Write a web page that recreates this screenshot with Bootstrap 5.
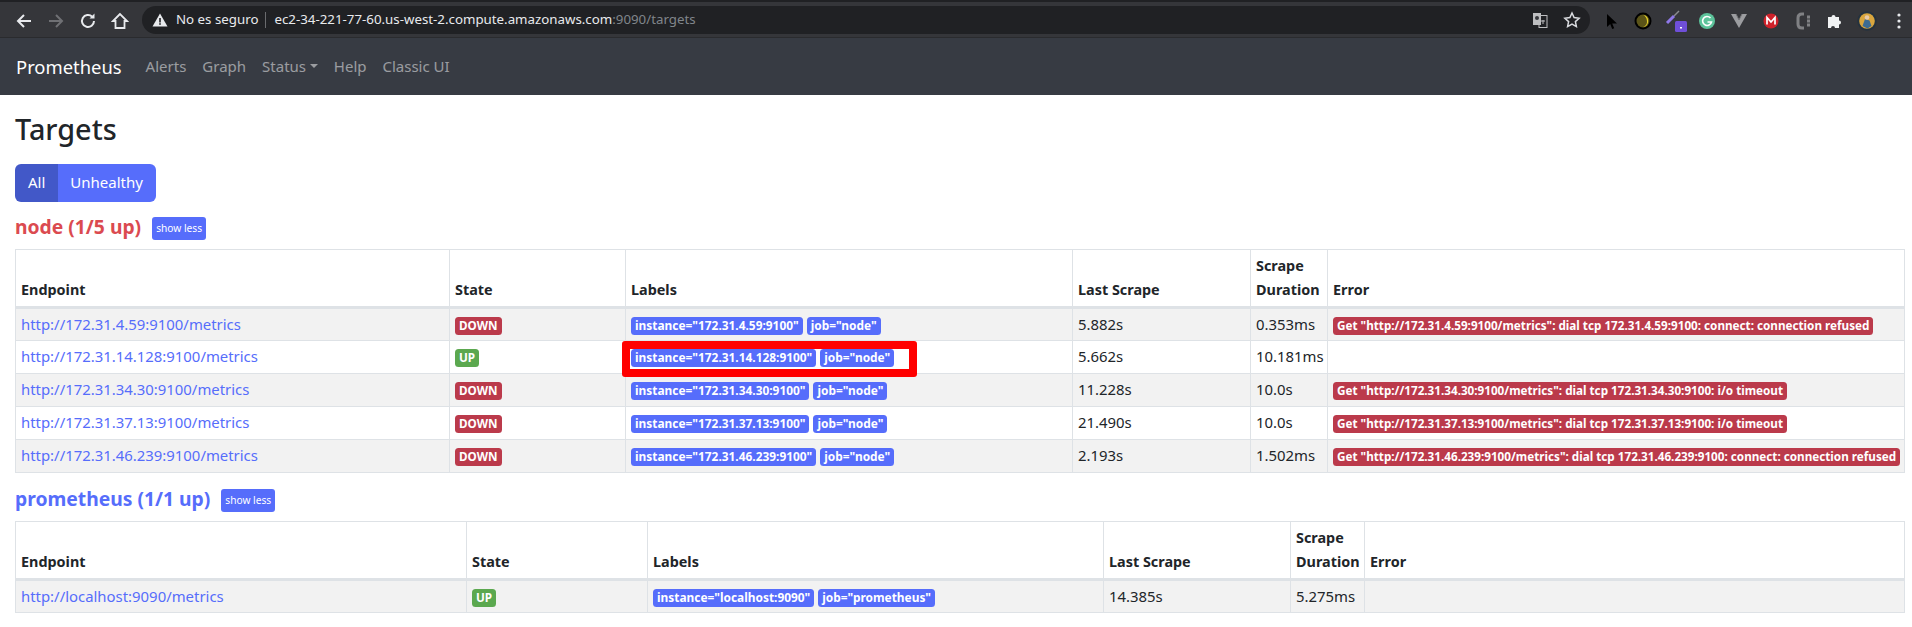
<!DOCTYPE html>
<html lang="en">
<head>
    <meta charset="UTF-8">
    <meta name="viewport" content="width=device-width, initial-scale=1.0">
    <title>Prometheus Time Series Collection and Processing Server</title>
    <link rel="stylesheet" href="https://cdn.jsdelivr.net/npm/bootstrap@5.3.0/dist/css/bootstrap.min.css">
    <style>
        body {
            font-family: "Noto Sans", "Open Sans", sans-serif;
            font-size: 14.4px;
            color: #212529;
            background: #fff;
            overflow: hidden;
        }
        /* browser toolbar */
        .chrome-bar {
            height: 38px;
            background: #35363a;
            border-top: 2px solid #202124;
            border-bottom: 1px solid #2a2b2e;
        }
        .chrome-btn {
            width: 32px;
            flex: none;
        }
        .ext-icons { margin-right: -3px; }
        .url-pill {
            height: 28px;
            margin-left: 6px;
            width: 1448px;
            background: #202124;
            border-radius: 14px;
            color: #e8eaed;
            font-size: 13.3px;
            padding: 0 10px;
        }
        .url-pill .sep { width: 1px; height: 16px; background: #6a6b6e; margin: 0 8px 0 7px; }
        .url-pill .dim { color: #80868b; }
        .star-icon { margin-left: 15px; margin-right: -1px; }
        /* prometheus navbar */
        .prom-nav {
            height: 57px;
            background: #373b43;
            padding: 0 16px;
        }
        .prom-nav .navbar-brand { font-size: 18.4px; padding: 0; margin-right: 16px; color: #fff; }
        .prom-nav .nav-link { font-size: 15px; padding: 0 7px; color: rgba(255, 255, 255, .5); }
        .page-body { padding: 0 15px 0 15px; }
        .page-title { font-size: 28.8px; font-weight: 500; margin: 17px 0 17px; line-height: 1.2; }
        .filter-btn { font-size: 15px; height: 38px; padding: 0 13px; border: 0; color: #fff; background: #566dfb; }
        .filter-btn.active, .filter-btn:hover { background: #4258c8; color: #fff; }
        .group-head { height: 47px; padding-top: 4px; }
        .group-title { font-size: 19.3px; font-weight: 700; margin: 0; }
        .is-bad { color: #db4a50; }
        .is-good { color: #566dfb; }
        .less-btn { font-size: 10.2px; height: 23px; padding: 0 4px; margin-left: 11px; margin-top: 3px; border: 0; border-radius: 3px; background: #566dfb; color: #fff; }
        .targets-table { table-layout: fixed; width: 1890px; margin-bottom: 0; --bs-table-striped-bg: #f2f2f2; --bs-table-border-color: #dee2e6; }
        .targets-table th { font-size: 14.4px; vertical-align: bottom; padding: 4px 5px; line-height: 24px; font-weight: 700; }
        .targets-table thead tr { height: 57px; }
        .targets-table thead th { border-bottom-width: 3px; }
        .targets-table td { font-size: 14.9px; padding: 0 5px; height: 33px; vertical-align: middle; }
        .targets-table a { color: #566dfb; text-decoration: none; }
        .targets-table .badge { font-size: 11.7px; padding: 3px 4px; border-radius: 3.5px; font-weight: 700; }
        .targets-table .lbl { background: #566dfb; margin-right: 4px; font-size: 11.9px; }
        .st-down, .err { background: #bb3a4b; }
        .st-up { background: #5ba84f; }
        .second-gap { margin-top: 1px; }
        .cell-mark { position: relative; }
        .red-mark {
            position: absolute;
            left: -4px;
            top: 0;
            width: 295px;
            height: 36px;
            border: 8px solid #f00;
            border-radius: 3px;
            pointer-events: none;
        }
        .w-ep1 { width: 434px; } .w-st1 { width: 176px; } .w-lb1 { width: 447px; } .w-ls1 { width: 178px; } .w-du1 { width: 77px; }
        .w-ep2 { width: 451px; } .w-st2 { width: 181px; } .w-lb2 { width: 456px; } .w-ls2 { width: 187px; } .w-du2 { width: 74px; }
    </style>
</head>
<body>
    <div class="chrome-bar d-flex align-items-center ps-2">
        <div class="chrome-btn text-center"><svg width="18" height="18" viewBox="0 0 18 18" fill="none" stroke="#e8eaed" stroke-width="2"><path d="M16 9H3M9 3L3 9l6 6"/></svg></div>
        <div class="chrome-btn text-center"><svg width="18" height="18" viewBox="0 0 18 18" fill="none" stroke="#6f7074" stroke-width="2"><path d="M2 9h13M9 3l6 6-6 6"/></svg></div>
        <div class="chrome-btn text-center"><svg width="18" height="18" viewBox="0 0 18 18" fill="none" stroke="#e8eaed" stroke-width="2"><path d="M15 9a6 6 0 1 1-1.800-4.300"/><path d="M15.500 1.500v5h-5z" fill="#e8eaed" stroke="none"/></svg></div>
        <div class="chrome-btn text-center"><svg width="18" height="18" viewBox="0 0 18 18" fill="none" stroke="#e8eaed" stroke-width="1.800"><path d="M9 2L2 9h2.500v7h9V9H16z"/></svg></div>
        <div class="url-pill d-flex align-items-center">
            <svg width="16" height="16" viewBox="0 0 16 16" class="me-2"><path d="M8 1.500L15.500 14.500H.5z" fill="#e8eaed"/><rect x="7.200" y="6" width="1.600" height="4.500" fill="#202124"/><rect x="7.200" y="11.200" width="1.600" height="1.600" fill="#202124"/></svg>
            <span>No es seguro</span><span class="sep"></span>
            <span>ec2-34-221-77-60.us-west-2.compute.amazonaws.com<span class="dim">:9090/targets</span></span>
            <span class="ms-auto d-flex align-items-center">
                <svg width="16" height="16" viewBox="0 0 16 16"><rect x="1" y="1" width="8" height="12" fill="#bdbec0"/><rect x="7" y="3.500" width="8" height="12" fill="none" stroke="#bdbec0"/><circle cx="5" cy="6" r="2" fill="#35363a"/><path d="M9 9h4M11 8v4" stroke="#bdbec0"/></svg>
                <svg class="star-icon" width="18" height="18" viewBox="0 0 18 18" fill="none" stroke="#dadce0" stroke-width="1.500"><path d="M9 2l2.100 4.600 5 .6-3.700 3.400 1 5L9 13.100 4.600 15.600l1-5L1.900 7.200l5-.6z"/></svg>
            </span>
        </div>
        <div class="d-flex align-items-center ms-auto ext-icons">
            <div class="chrome-btn text-center"><svg width="14" height="18" viewBox="0 0 14 18"><path d="M3 2v13l3.200-3 2 5 2-.8-2-4.800H13z" fill="#000"/></svg></div>
            <div class="chrome-btn text-center"><svg width="18" height="18" viewBox="0 0 18 18"><circle cx="9" cy="9" r="8.500" fill="#000"/><circle cx="9" cy="9" r="6.500" fill="#5b5418"/><path d="M9 2.800a6.300 6.300 0 0 1 0 12.400c3-1.400 4.300-3.600 4-6.300C12.700 6 11.300 4 9 2.800z" fill="#e3cf2c"/></svg></div>
            <div class="chrome-btn text-center"><svg width="26" height="26" viewBox="0 0 26 26"><path d="M12 9L17 4" stroke="#8a8b8e" stroke-width="1.500"/><path d="M5 16l7-7" stroke="#8f78e8" stroke-width="3"/><rect x="13" y="14" width="12" height="11" rx="1.500" fill="#6f4fd8"/><rect x="18" y="20" width="2" height="1.500" fill="#fff"/></svg></div>
            <div class="chrome-btn text-center"><svg width="18" height="18" viewBox="0 0 18 18"><circle cx="9" cy="9" r="8" fill="#5cc29a"/><path d="M12.500 6A4.500 4.500 0 1 0 13.500 10H9.500" fill="none" stroke="#fff" stroke-width="1.600"/></svg></div>
            <div class="chrome-btn text-center"><svg width="18" height="18" viewBox="0 0 18 18"><path d="M1 2h5l3 6 3-6h5L9 16z" fill="#9c9da0"/><path d="M6 2l3 6 3-6" fill="none" stroke="#77787b"/></svg></div>
            <div class="chrome-btn text-center"><svg width="16" height="16" viewBox="0 0 16 16"><circle cx="8" cy="8" r="7.500" fill="#d0212a"/><path d="M4 11.500v-7l4 4.500 4-4.500v7" fill="none" stroke="#fff" stroke-width="1.700"/></svg></div>
            <div class="chrome-btn text-center"><svg width="16" height="18" viewBox="0 0 16 18"><path d="M9 2H7Q3 2 3 6v6q0 4 4 4h2" fill="none" stroke="#808184" stroke-width="3"/><rect x="12" y="3.500" width="3" height="3" fill="#808184"/><rect x="12" y="7.500" width="3" height="3" fill="#808184"/><rect x="12" y="11.500" width="3" height="3" fill="#808184"/></svg></div>
            <div class="chrome-btn text-center"><svg width="16" height="16" viewBox="0 0 16 16"><path d="M1 4h3.500a2 2 0 1 1 4 0H12v3.500a2 2 0 1 1 0 4V15H8a2 2 0 1 0-4 0H1z" fill="#f1f3f4"/></svg></div>
            <div class="chrome-btn text-center"><svg width="20" height="20" viewBox="0 0 20 20"><circle cx="10" cy="10" r="9.800" fill="#24323f"/><circle cx="10" cy="10" r="7.800" fill="#d9a63e"/><path d="M5.500 15l2.500-7 4.500 1.500 2 5.500-4 2.500z" fill="#3c6b92"/><circle cx="10" cy="6.500" r="2.300" fill="#e8c9a8"/></svg></div>
            <div class="chrome-btn text-center"><svg width="4" height="16" viewBox="0 0 4 16"><circle cx="2" cy="2" r="1.600" fill="#e8eaed"/><circle cx="2" cy="8" r="1.600" fill="#e8eaed"/><circle cx="2" cy="14" r="1.600" fill="#e8eaed"/></svg></div>
        </div>
    </div>

    <nav class="navbar navbar-expand navbar-dark prom-nav">
        <a class="navbar-brand" href="#">Prometheus</a>
        <ul class="navbar-nav">
            <li class="nav-item"><a class="nav-link" href="#">Alerts</a></li>
            <li class="nav-item"><a class="nav-link" href="#">Graph</a></li>
            <li class="nav-item"><a class="nav-link dropdown-toggle" href="#">Status</a></li>
            <li class="nav-item"><a class="nav-link" href="#">Help</a></li>
            <li class="nav-item"><a class="nav-link" href="#">Classic UI</a></li>
        </ul>
    </nav>

    <div class="page-body">
        <h2 class="page-title">Targets</h2>
        <div class="btn-group d-inline-flex" role="group">
            <button class="btn filter-btn active">All</button>
            <button class="btn filter-btn">Unhealthy</button>
        </div>

        <div class="group-head d-flex align-items-center">
            <h3 class="group-title is-bad">node (1/5 up)</h3>
            <button class="btn less-btn">show less</button>
        </div>
        <table class="table table-bordered table-striped targets-table">
            <colgroup><col class="w-ep1"><col class="w-st1"><col class="w-lb1"><col class="w-ls1"><col class="w-du1"><col></colgroup>
            <thead>
                <tr><th>Endpoint</th><th>State</th><th>Labels</th><th>Last Scrape</th><th>Scrape Duration</th><th>Error</th></tr>
            </thead>
            <tbody>
                <tr>
                    <td><a href="#">http://172.31.4.59:9100/metrics</a></td>
                    <td><span class="badge st-down">DOWN</span></td>
                    <td><span class="badge lbl">instance="172.31.4.59:9100"</span><span class="badge lbl">job="node"</span></td>
                    <td>5.882s</td><td>0.353ms</td>
                    <td><span class="badge err">Get "http://172.31.4.59:9100/metrics": dial tcp 172.31.4.59:9100: connect: connection refused</span></td>
                </tr>
                <tr>
                    <td><a href="#">http://172.31.14.128:9100/metrics</a></td>
                    <td><span class="badge st-up">UP</span></td>
                    <td class="cell-mark"><span class="badge lbl">instance="172.31.14.128:9100"</span><span class="badge lbl">job="node"</span><span class="red-mark"></span></td>
                    <td>5.662s</td><td>10.181ms</td>
                    <td></td>
                </tr>
                <tr>
                    <td><a href="#">http://172.31.34.30:9100/metrics</a></td>
                    <td><span class="badge st-down">DOWN</span></td>
                    <td><span class="badge lbl">instance="172.31.34.30:9100"</span><span class="badge lbl">job="node"</span></td>
                    <td>11.228s</td><td>10.0s</td>
                    <td><span class="badge err">Get "http://172.31.34.30:9100/metrics": dial tcp 172.31.34.30:9100: i/o timeout</span></td>
                </tr>
                <tr>
                    <td><a href="#">http://172.31.37.13:9100/metrics</a></td>
                    <td><span class="badge st-down">DOWN</span></td>
                    <td><span class="badge lbl">instance="172.31.37.13:9100"</span><span class="badge lbl">job="node"</span></td>
                    <td>21.490s</td><td>10.0s</td>
                    <td><span class="badge err">Get "http://172.31.37.13:9100/metrics": dial tcp 172.31.37.13:9100: i/o timeout</span></td>
                </tr>
                <tr>
                    <td><a href="#">http://172.31.46.239:9100/metrics</a></td>
                    <td><span class="badge st-down">DOWN</span></td>
                    <td><span class="badge lbl">instance="172.31.46.239:9100"</span><span class="badge lbl">job="node"</span></td>
                    <td>2.193s</td><td>1.502ms</td>
                    <td><span class="badge err">Get "http://172.31.46.239:9100/metrics": dial tcp 172.31.46.239:9100: connect: connection refused</span></td>
                </tr>
            </tbody>
        </table>

        <div class="group-head d-flex align-items-center second-gap">
            <h3 class="group-title is-good">prometheus (1/1 up)</h3>
            <button class="btn less-btn">show less</button>
        </div>
        <table class="table table-bordered table-striped targets-table">
            <colgroup><col class="w-ep2"><col class="w-st2"><col class="w-lb2"><col class="w-ls2"><col class="w-du2"><col></colgroup>
            <thead>
                <tr><th>Endpoint</th><th>State</th><th>Labels</th><th>Last Scrape</th><th>Scrape Duration</th><th>Error</th></tr>
            </thead>
            <tbody>
                <tr>
                    <td><a href="#">http://localhost:9090/metrics</a></td>
                    <td><span class="badge st-up">UP</span></td>
                    <td><span class="badge lbl">instance="localhost:9090"</span><span class="badge lbl">job="prometheus"</span></td>
                    <td>14.385s</td><td>5.275ms</td>
                    <td></td>
                </tr>
            </tbody>
        </table>
    </div>

    <script src="https://cdn.jsdelivr.net/npm/bootstrap@5.3.0/dist/js/bootstrap.bundle.min.js"></script>
</body>
</html>
